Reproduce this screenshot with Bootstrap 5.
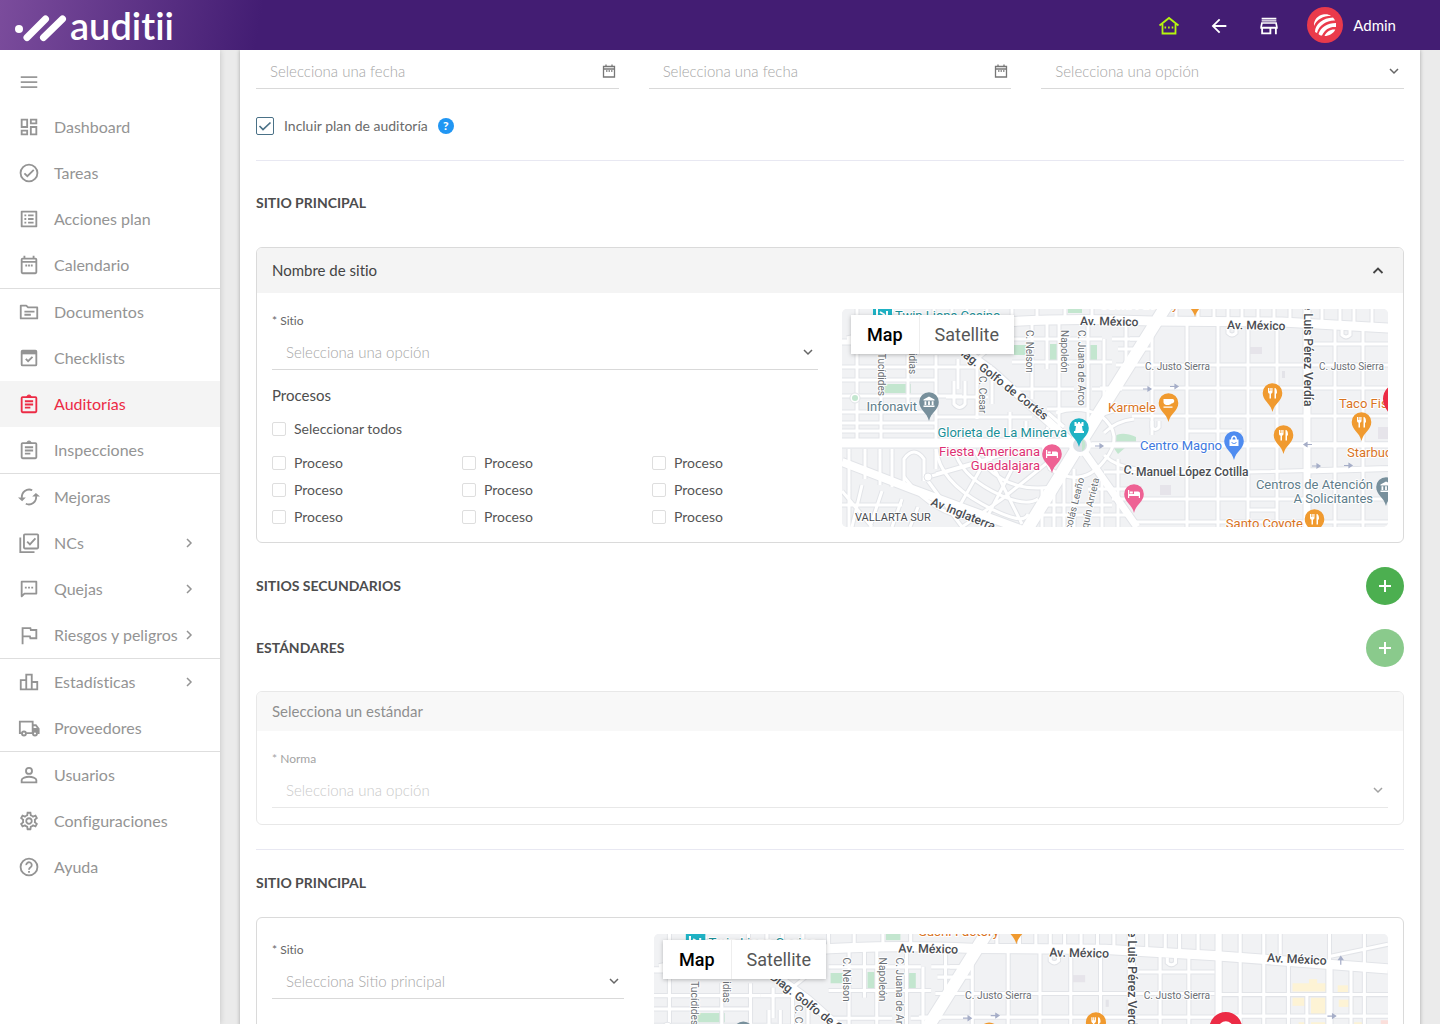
<!DOCTYPE html>
<html lang="es">
<head>
<meta charset="utf-8">
<meta name="viewport" content="width=device-width, initial-scale=1">
<title>Auditii - Auditorías</title>
<link href="https://cdn.jsdelivr.net/npm/bootstrap@5.3.0/dist/css/bootstrap.min.css" rel="stylesheet">
<style>
  body { font-family: Lato, "Open Sans", sans-serif; font-size: 15px; line-height: 18px; color: #4d4d4d; background: #ebebeb; font-variant-ligatures: none; }
  .au-shell { height: 100vh; }
  .au-top { height: 50px; background: linear-gradient(100deg, #7b4c9c 0, #431d73 260px); color: #fff; z-index: 3; }
  .au-logo { font-size: 38px; line-height: 50px; font-weight: 600; color: #fff; }
  .au-top .btn { width: 50px; height: 50px; color: #fff; }
  .au-user { gap: 10px; margin-left: 13px; padding-right: 28px; }
  .au-side { width: 220px; background: #fff; box-shadow: 0 0 6px rgba(0,0,0,.18); z-index: 2; }
  .au-menu { height: 54px; padding: 10px 18px 0; color: #999; }
  .au-menu .btn { color: inherit; }
  .au-link { height: 46px; padding: 0 23px 0 18px; color: #949494; text-decoration: none; font-size: 16px; white-space: nowrap; }
  .au-link:hover { color: #666; }
  .au-link.active { background: #f4f4f4; color: #ec2b45; }
  .au-link .au-ico { margin-right: 14px; }
  .au-group + .au-group { border-top: 1px solid #dedede; }
  .au-ico { width: 22px; height: 22px; flex: none; fill: currentColor; }
  .au-ico-sm { width: 16px; height: 16px; flex: none; fill: currentColor; }
  .au-stroke { fill: none; stroke: currentColor; stroke-width: 2; }
  .au-main { padding: 0 20px; }
  .au-sheet { padding: 0 16px; background: #fff; box-shadow: 0 0 4px rgba(0,0,0,.3); }
  .au-g30 { --bs-gutter-x: 30px; }
  .au-field { border-bottom: 1px solid #d9d9d9; padding-right: 2px; color: #777; }
  .au-field .form-control, .au-field .form-select { height: 34px; border: 0; border-radius: 0; padding: 0 14px; font-size: 15px; font-weight: 300; color: #a6a6a6; background-color: transparent; box-shadow: none; }
  .au-field .form-control::placeholder { color: #a6a6a6; opacity: 1; }
  .au-field .form-select { background-size: 12px 12px; background-position: right 2px center; background-image: url("data:image/svg+xml,%3csvg xmlns='http://www.w3.org/2000/svg' viewBox='0 0 12 12'%3e%3cpath fill='none' stroke='%23666' stroke-width='1.5' d='M2 4l4 4 4-4'/%3e%3c/svg%3e"); }
  .au-first { padding-top: 4px; }
  .au-lbl { font-size: 12px; line-height: 16px; padding-bottom: 2px; color: #666; }
  .au-rule { margin: 0; border: 0; border-top: 1px solid #e8e8f2; opacity: 1; }
  .au-title { margin: 0; font-size: 14px; line-height: 18px; font-weight: 700; color: #4d4d4d; }
  .au-title-lg { padding: 33px 0 35px; }
  .au-title-md { padding: 24px 0 25px; }
  .au-box { border: 1px solid #dadada; border-radius: 6px; overflow: hidden; background: #fff; }
  .au-head { background: #f4f4f4; height: 45px; padding: 0 15px 2px; color: #444; font-size: 15px; }
  .au-head .btn { color: #444; padding: 0 2px; }
  .au-body { padding: 16px 15px 15px; }
  .au-muted { opacity: .6; }
  .au-muted .au-head { height: 39px; }
  .au-muted .au-body { padding-bottom: 16px; }
  .au-check { gap: 8px; cursor: pointer; color: #555; font-size: 14px; }
  .au-check .form-check-input { width: 14px; height: 14px; margin: 0; border: 1px solid #dedede; border-radius: 2px; box-shadow: none; }
  .au-grid { row-gap: 9px; }
  .au-plan { gap: 10px; padding: 28px 0 25px; color: #6b6b6b; font-size: 14px; }
  .au-plan .form-check-input { width: 18px; height: 18px; margin: 0; border: 1px solid #4a7187; border-radius: 2px; background-color: #fff; background-size: 16px 16px; background-position: center; }
  .au-plan .form-check-input:checked { background-image: url("data:image/svg+xml,%3csvg xmlns='http://www.w3.org/2000/svg' viewBox='0 0 16 16'%3e%3cpath fill='none' stroke='%234a7187' stroke-width='1.7' d='M2.5 8l3.5 3.5L13.5 4.5'/%3e%3c/svg%3e"); }
  .au-help { width: 16px; height: 16px; background: #2196f3; color: #fff; font-size: 12px; line-height: 16px; font-weight: 900; border: 0; padding: 0; }
  .au-add { width: 38px; height: 38px; background: #4caf50; border: 0; padding: 0; color: #fff; }
  .au-add:disabled { background: #4caf50; opacity: .65; }
  .au-map { border-radius: 5px; overflow: hidden; height: 218px; background: #f1f2f4; }
  .au-map svg { display: block; width: 100%; height: auto; }
  .au-map text { font-family: Roboto, sans-serif; paint-order: stroke; stroke: #fff; stroke-width: 2px; stroke-linejoin: round; }
  .au-mode { top: 6px; left: 9px; box-shadow: 0 1px 4px rgba(0,0,0,.25); background: #fff; }
  .au-mode .btn { height: 39px; padding: 0 16px; border: 0; border-radius: 0; font-family: Roboto, sans-serif; font-size: 18px; line-height: 39px; color: #565656; }
  .au-mode .btn.active { color: #000; font-weight: 500; background: #fff; }
  .au-mode .btn + .btn { border-left: 1px solid #eee; padding: 0 15px; }
</style>
<script src="https://cdn.jsdelivr.net/npm/bootstrap@5.3.0/dist/js/bootstrap.bundle.min.js"></script>
</head>
<body>
<div class="au-shell d-flex flex-column overflow-hidden">
  <header class="au-top d-flex align-items-center flex-shrink-0 position-relative">
    <a href="#" class="au-logo d-flex align-items-center text-decoration-none" aria-label="auditii">
      <svg width="70" height="50" viewBox="0 0 70 50" aria-hidden="true"><circle cx="19" cy="29" r="4" fill="#fff"/><path d="M27 37.500 45.500 19M43.500 37.500 62.500 19" stroke="#fff" stroke-width="7" stroke-linecap="round"/></svg><span>auditii</span>
    </a>
    <nav class="d-flex align-items-center ms-auto pe-3" aria-label="Cuenta">
      <button class="btn p-0 border-0" type="button" aria-label="Inicio"><svg width="22" height="22" viewBox="0 0 22 22" fill="none" stroke="#b6f50e" stroke-width="1.800"><path d="M1.500 10.500 11 3l9.500 7.500M4.500 9v9.500h13V9"/><path d="M6.500 12.500h9" stroke-dasharray="1.600 2"/></svg></button>
      <button class="btn p-0 border-0" type="button" aria-label="Volver"><svg class="au-ico" viewBox="0 0 24 24"><path d="M20 11H7.830l5.590-5.590L12 4l-8 8 8 8 1.410-1.410L7.830 13H20v-2z"/></svg></button>
      <button class="btn p-0 border-0" type="button" aria-label="Tienda"><svg class="au-ico" viewBox="0 0 24 24"><path d="M4 3h16v1.800H4zM4 5.800h16v1.400H4zM18.900 9.600l.7 3.300H4.400l.7-3.300h13.800M20.500 8h-17L2.500 13v2h1v6h11v-6h4v6h2v-6h1v-2L20.500 8zM5.500 19v-4h7v4h-7z"/></svg></button>
      <a href="#" class="au-user d-flex align-items-center text-white text-decoration-none">
        <svg width="36" height="36" viewBox="0 0 36 36" aria-hidden="true"><circle cx="18" cy="18" r="18" fill="#ea3a4b"/><g fill="#fff"><path d="M7 19C6.500 13 11 8 17 7.300c3-.3 5 .2 7 1.400C16 9 10 12 7 19z"/><path d="M8 25c0-8 8-14 18-14.500 1 1 1.500 2 2 3C20 13 12 18 10 26z"/><path d="M11.500 27C14 20 20 16 29 16v4c-6-.5-11 2-14 8.500-1.500 0-2.500-.5-3.500-1.500z"/><path d="M17.500 29c2-4.500 6-7 10.800-6.500C26.500 26.500 22 29 17.500 29z"/></g></svg>
        <span>Admin</span>
      </a>
    </nav>
  </header>

  <div class="d-flex flex-grow-1 overflow-hidden">
    <aside class="au-side flex-shrink-0 position-relative">
      <div class="au-menu d-flex align-items-center"><button class="btn p-0 border-0 d-flex" type="button" aria-label="Menú"><svg class="au-ico" viewBox="0 0 24 24"><path d="M3 18.500h18v-1.800H3zm0-5.500h18v-1.800H3zm0-7.300v1.800h18V5.700z"/></svg></button></div>
      <nav aria-label="Principal">
        <div class="au-group">
          <a href="#" class="au-link d-flex align-items-center"><svg class="au-ico" viewBox="0 0 24 24"><path d="M19 5v2h-4V5h4M9 5v6H5V5h4m10 8v6h-4v-6h4M9 17v2H5v-2h4M21 3h-8v6h8V3zM11 3H3v10h8V3zm10 8h-8v10h8V11zm-10 4H3v6h8v-6z"/></svg>Dashboard</a>
          <a href="#" class="au-link d-flex align-items-center"><svg class="au-ico au-stroke" viewBox="0 0 24 24"><circle cx="12" cy="12" r="9.200"/><path d="M7 12.300l3.200 3.200L17.200 8.600"/></svg>Tareas</a>
          <a href="#" class="au-link d-flex align-items-center"><svg class="au-ico" viewBox="0 0 24 24"><path d="M19 5v14H5V5h14m1.100-2H3.900c-.5 0-.9.4-.9.9v16.200c0 .4.4.9.9.9h16.200c.4 0 .9-.5.9-.9V3.900c0-.5-.5-.9-.9-.9zM11 7h6v2h-6V7zm0 4h6v2h-6v-2zm0 4h6v2h-6zM7 7h2v2H7zm0 4h2v2H7zm0 4h2v2H7z"/></svg>Acciones plan</a>
          <a href="#" class="au-link d-flex align-items-center"><svg class="au-ico au-stroke" viewBox="0 0 24 24"><rect x="4" y="5" width="16" height="16" rx="1"/><path d="M4 8.500h16M7 2v3M17 2v3M8 12.500h2M11 12.500h2M14 12.500h2"/></svg>Calendario</a>
        </div>
        <div class="au-group">
          <a href="#" class="au-link d-flex align-items-center"><svg class="au-ico au-stroke" viewBox="0 0 24 24"><path d="M3 5h6l2 2h10v12H3z" stroke-linejoin="round"/><path d="M7 11.500h11M7 15h7"/></svg>Documentos</a>
          <a href="#" class="au-link d-flex align-items-center"><svg class="au-ico au-stroke" viewBox="0 0 24 24"><rect x="4" y="4" width="16" height="16" rx="1"/><path d="M4 6h16" stroke-width="4"/><path d="M8.500 13l2.500 2.500 4.800-4.800"/></svg>Checklists</a>
          <a href="#" class="au-link active d-flex align-items-center" aria-current="page"><svg class="au-ico au-stroke" viewBox="0 0 24 24"><rect x="4" y="4.500" width="16" height="16.500" rx="1"/><path d="M7.500 9h9M7.500 12.500h9M7.500 16h6"/><path d="M9.500 4a2.600 2.600 0 0 1 5 0z" fill="currentColor" stroke-width="1"/></svg>Auditorías</a>
          <a href="#" class="au-link d-flex align-items-center"><svg class="au-ico au-stroke" viewBox="0 0 24 24"><rect x="4" y="4.500" width="16" height="16.500" rx="1"/><path d="M7.500 9h9M7.500 12.500h9M7.500 16h6"/><path d="M9.500 4a2.600 2.600 0 0 1 5 0z" fill="currentColor" stroke-width="1"/></svg>Inspecciones</a>
        </div>
        <div class="au-group">
          <a href="#" class="au-link d-flex align-items-center"><svg class="au-ico au-stroke" viewBox="0 0 24 24"><path d="M15.500 4.600A8 8 0 0 0 4.300 13M8.500 19.400A8 8 0 0 0 19.700 11"/><path d="M0 12.500h8.500L4.500 16.500zM24 11.500h-8.500L19.500 7.500z" fill="currentColor" stroke="none"/></svg>Mejoras</a>
          <a href="#" class="au-link d-flex align-items-center"><svg class="au-ico au-stroke" viewBox="0 0 24 24"><rect x="6.500" y="2.500" width="15.500" height="15.500" rx="1"/><path d="M2.500 6v16H18M10 10.500l3 3 6-6.500"/></svg>NCs<svg class="au-ico-sm au-stroke ms-auto" viewBox="0 0 16 16"><path d="M6 4l4 4-4 4" stroke-width="1.500"/></svg></a>
          <a href="#" class="au-link d-flex align-items-center"><svg class="au-ico au-stroke" viewBox="0 0 24 24"><path d="M4 4h16v13H7l-3 3z" stroke-linejoin="round"/><path d="M7.500 10.500h2M11 10.500h2M14.500 10.500h2"/></svg>Quejas<svg class="au-ico-sm au-stroke ms-auto" viewBox="0 0 16 16"><path d="M6 4l4 4-4 4" stroke-width="1.500"/></svg></a>
          <a href="#" class="au-link d-flex align-items-center"><svg class="au-ico au-stroke" viewBox="0 0 24 24"><path d="M5 22V4.500h8.500l.5 2h6v9h-6.500l-.5-2H5"/></svg>Riesgos y peligros<svg class="au-ico-sm au-stroke ms-auto" viewBox="0 0 16 16"><path d="M6 4l4 4-4 4" stroke-width="1.500"/></svg></a>
        </div>
        <div class="au-group">
          <a href="#" class="au-link d-flex align-items-center"><svg class="au-ico au-stroke" viewBox="0 0 24 24"><path d="M3 10h6v10H3zM9 4h6v16H9zM15 12h6v8h-6z"/></svg>Estadísticas<svg class="au-ico-sm au-stroke ms-auto" viewBox="0 0 16 16"><path d="M6 4l4 4-4 4" stroke-width="1.500"/></svg></a>
          <a href="#" class="au-link d-flex align-items-center"><svg class="au-ico au-stroke" viewBox="0 0 24 24"><path d="M4 17.500H2V5h14v12.500H9M16 9h3.500l3 4v4.500H21"/><path d="M16 12h7v5h-7z" fill="currentColor" stroke="none"/><circle cx="6.500" cy="18" r="2.200" fill="#fff"/><circle cx="18.500" cy="18" r="2.200" fill="#fff"/></svg>Proveedores</a>
        </div>
        <div class="au-group">
          <a href="#" class="au-link d-flex align-items-center"><svg class="au-ico au-stroke" viewBox="0 0 24 24"><circle cx="12" cy="7.500" r="3.300"/><path d="M4 20V17.500c0-2.300 5-3.600 8-3.600s8 1.300 8 3.600V20z"/></svg>Usuarios</a>
          <a href="#" class="au-link d-flex align-items-center"><svg class="au-ico" viewBox="0 0 24 24"><path d="M19.430 12.980c.04-.32.070-.64.070-.98 0-.34-.03-.66-.07-.98l2.110-1.650c.19-.15.24-.42.12-.64l-2-3.460c-.09-.16-.26-.25-.44-.25-.06 0-.12.010-.17.030l-2.490 1c-.52-.4-1.080-.73-1.690-.98l-.38-2.650C14.460 2.180 14.250 2 14 2h-4c-.25 0-.46.18-.49.42l-.38 2.650c-.61.25-1.170.59-1.690.98l-2.490-1c-.06-.02-.12-.03-.18-.03-.17 0-.34.090-.43.250l-2 3.460c-.13.220-.07.490.12.640l2.110 1.650c-.04.320-.07.650-.07.980 0 .33.030.66.070.98l-2.110 1.650c-.19.150-.24.420-.12.640l2 3.460c.09.160.26.250.44.250.06 0 .12-.01.170-.03l2.490-1c.52.400 1.080.730 1.690.980l.38 2.650c.03.240.24.420.49.420h4c.25 0 .46-.18.490-.42l.38-2.650c.61-.25 1.170-.59 1.690-.98l2.490 1c.06.020.12.030.18.030.17 0 .34-.09.430-.25l2-3.460c.12-.22.070-.49-.12-.64l-2.110-1.650zm-1.980-1.710c.04.310.05.520.05.730 0 .21-.02.430-.05.730l-.14 1.130.89.700 1.080.840-.7 1.210-1.270-.51-1.040-.42-.9.680c-.43.320-.84.560-1.250.730l-1.060.43-.16 1.130-.2 1.350h-1.400l-.19-1.350-.16-1.130-1.060-.43c-.43-.18-.83-.41-1.230-.71l-.91-.7-1.060.43-1.270.51-.7-1.210 1.080-.84.890-.7-.14-1.130c-.03-.31-.05-.54-.05-.74s.02-.43.050-.73l.14-1.130-.89-.7-1.080-.84.700-1.210 1.270.51 1.040.42.900-.68c.43-.32.840-.56 1.250-.73l1.060-.43.160-1.130.2-1.350h1.390l.19 1.350.16 1.130 1.060.43c.43.180.83.410 1.230.71l.91.700 1.060-.43 1.270-.51.700 1.210-1.070.85-.89.700.14 1.130zM12 8c-2.210 0-4 1.790-4 4s1.790 4 4 4 4-1.790 4-4-1.790-4-4-4zm0 6c-1.100 0-2-.9-2-2s.9-2 2-2 2 .9 2 2-.9 2-2 2z"/></svg>Configuraciones</a>
          <a href="#" class="au-link d-flex align-items-center"><svg class="au-ico au-stroke" viewBox="0 0 24 24"><circle cx="12" cy="12" r="9.200"/><path d="M9 10a3 3 0 1 1 4.700 2.300c-1.100.8-1.700 1.300-1.700 2.700M12 16.300v2"/></svg>Ayuda</a>
        </div>
      </nav>
    </aside>

    <main class="au-main flex-grow-1 overflow-hidden">
      <form class="au-sheet">
        <div class="row au-g30 au-first">
          <div class="col-4"><div class="au-field d-flex align-items-center"><input class="form-control" type="text" placeholder="Selecciona una fecha" aria-label="Fecha de inicio"><svg class="au-ico-sm au-stroke" viewBox="0 0 16 16"><path d="M2.500 3.500h11v10.500h-11zM2.500 6h11M5 1.500v2M11 1.500v2M5 8h1.500M7.500 8H9M10 8h1.500" stroke-width="1.300"/></svg></div></div>
          <div class="col-4"><div class="au-field d-flex align-items-center"><input class="form-control" type="text" placeholder="Selecciona una fecha" aria-label="Fecha de fin"><svg class="au-ico-sm au-stroke" viewBox="0 0 16 16"><path d="M2.500 3.500h11v10.500h-11zM2.500 6h11M5 1.500v2M11 1.500v2M5 8h1.500M7.500 8H9M10 8h1.500" stroke-width="1.300"/></svg></div></div>
          <div class="col-4"><div class="au-field"><select class="form-select" aria-label="Opción"><option>Selecciona una opción</option></select></div></div>
        </div>
        <div class="au-plan d-flex align-items-center"><input class="form-check-input" type="checkbox" id="plan" checked><label for="plan">Incluir plan de auditoría</label><button type="button" class="au-help rounded-circle" aria-label="Ayuda sobre el plan">?</button></div>
        <hr class="au-rule">
        <h2 class="au-title au-title-lg">SITIO PRINCIPAL</h2>

        <section class="au-box">
          <div class="au-head d-flex align-items-center justify-content-between"><span>Nombre de sitio</span><button type="button" class="btn border-0 d-flex" aria-label="Contraer"><svg class="au-ico-sm au-stroke" viewBox="0 0 16 16"><path d="M3.500 11 8 6.500l4.500 4.500" stroke-width="1.800"/></svg></button></div>
          <div class="au-body">
            <div class="row gx-4">
              <div class="col-6">
                <label class="au-lbl d-block pt-1" for="sitio1">* Sitio</label>
                <div class="au-field pt-1"><select class="form-select" id="sitio1"><option>Selecciona una opción</option></select></div>
                <div class="pt-3 pb-3">Procesos</div>
                <label class="au-check d-flex align-items-center mb-3"><input class="form-check-input" type="checkbox">Seleccionar todos</label>
                <div class="au-grid row gx-4" id="procesos"></div>
              </div>
              <div class="col-6">
                <div class="au-map position-relative" data-w="546" data-top="0"></div>
              </div>
            </div>
          </div>
        </section>

        <div class="d-flex align-items-center justify-content-between pt-4"><h2 class="au-title">SITIOS SECUNDARIOS</h2><button type="button" class="au-add btn rounded-circle d-flex align-items-center justify-content-center" aria-label="Agregar sitio"><svg width="14" height="14" viewBox="0 0 14 14"><path d="M7 1v12M1 7h12" stroke="#fff" stroke-width="2"/></svg></button></div>
        <div class="d-flex align-items-center justify-content-between py-4"><h2 class="au-title">ESTÁNDARES</h2><button type="button" disabled class="au-add btn rounded-circle d-flex align-items-center justify-content-center" aria-label="Agregar estándar"><svg width="14" height="14" viewBox="0 0 14 14"><path d="M7 1v12M1 7h12" stroke="#fff" stroke-width="2"/></svg></button></div>

        <section class="au-box au-muted">
          <div class="au-head d-flex align-items-center">Selecciona un estándar</div>
          <div class="au-body">
            <label class="au-lbl d-block pt-1" for="norma">* Norma</label>
            <div class="au-field pt-1"><select class="form-select" id="norma"><option>Selecciona una opción</option></select></div>
          </div>
        </section>
        <hr class="au-rule mt-4">
        <h2 class="au-title au-title-md">SITIO PRINCIPAL</h2>

        <section class="au-box">
          <div class="au-body">
            <div class="row au-g30">
              <div class="col-4">
                <label class="au-lbl d-block pt-2" for="sitio2">* Sitio</label>
                <div class="au-field pt-1"><select class="form-select" id="sitio2"><option>Selecciona Sitio principal</option></select></div>
              </div>
              <div class="col-8">
                <div class="au-map position-relative" data-w="715" data-top="-2"></div>
              </div>
            </div>
          </div>
        </section>
      </form>
    </main>
  </div>
</div>

<script>
  document.getElementById('procesos').innerHTML = Array.from({length: 9}, () =>
    '<div class="col-4"><label class="au-check d-flex align-items-center"><input class="form-check-input" type="checkbox">Proceso</label></div>').join('');

  // Streets: [white width, path]
  const roads = [
    [3, 'M15 -4V130M39 46V130M66 46V103M94 46V130M0 58H104M0 71H94M0 87H120M0 103H94M0 114H94M0 122H94'],
    [3, 'M112 72V95Q118 102 123 95V72M104 58H150M135 56V110M150 66V95M94 108H190M104 88H146M168 103V130M184 112V130'],
    [3, 'M116 50V80M135 50L160 30M170 30H260M190 12V90M205 12V60M217 12V86M246 12V118M262 30V90M170 53H270M170 80H232M250 80H280M205 100H245M217 86V118M270 30H300M284 12V60'],
    [3, 'M92 -4V12M110 -4V12M125 -4V12M145 -4V12M170 -4V12M195 -4V12M223 -4V12M250 -4V12'],
    [3, 'M274 56H546M258 79H546M290 107H546M250 135H546M262 163H400M406 163L715 155M270 190H546M290 213H546M345 122H400M435 201H406'],
    [3, 'M288 30H310M310 28V126M345 14V218M376 14V218M406 14V218M435 14V218M493 14V218M521 14V218M465 35H546M276 40H310'],
    [3, 'M310 112V118Q313 123 317 118V112M386 20V24Q390 28 394 24V18M500 21V26Q504 30 508 26V20'],
    [3, 'M356 -4V12M372 -4V12M386 -4V12M400 -4V13M416 -4V13M432 -4V14M448 -4V15M480 -4V16M498 -4V17M512 -4V17M530 -4V18M334 -4V10'],
    [3, 'M7 140V218M23 140V170M38 140V176M50 140V178M62 176V150Q72 136 82 150V172M94 140V160M0 182L30 218M0 196H60M20 176L10 218M40 182L28 218M60 190L50 218M76 198L68 218'],
    [3, 'M94 140Q98 172 140 195T186 205M112 140Q118 165 150 182T196 190M132 140Q140 158 160 170T210 178M62 168Q90 205 130 210M86 168L150 150M86 172L120 218M120 218L160 190L210 150M150 140L118 196M170 160L140 218M150 155L180 215M94 165L180 140'],
    [3, 'M214 104Q236 96 258 106M206 118Q196 136 208 160Q240 180 262 152Q284 126 258 106M222 118L206 104M258 106L290 96M262 124Q274 112 292 110M262 146Q274 158 296 160'],
    [3, 'M200 178V218M212 170V218M222 165V218M232 160V218M200 196H270M190 206H290M246 180H300M260 170V218M276 150V218'],
    [3, 'M571 -4V218M594 -4V218M618 20V218M636 56V218M658 -4V218M679 26V218M692 -4V218M550 57H715M550 78H715M550 100H715M550 125H715M550 185H715M610 -4V18M658 20L715 8'],
    [5, 'M465 162L715 154M0 33H10M5 30L40 22L50 0'],
    [6, 'M550 -4V218M658 25V218'],
    [7, 'M241 141L295 218M465 -4V218'],
    [8, 'M0 153L70 180L181 221'],
    [8, 'M104 28L150 62L227 131'],
    [9, 'M30 26Q80 20 150 14T310 12L440 13L546 19L715 32'],
    [9, 'M0 134H237'],
    [5, 'M237 136H546'],
    [12, 'M326 -6L237 136L184 222']
  ];
  const parks = [[42,75,27,9],[208,35,9,19],[244,36,11,18],[226,-4,14,8],[172,36,12,10]];
  const halls = [[408,38,12,7,'#e6e4ea'],[440,62,3,7,'#e3e3e8'],[318,176,11,10,'#e6e4ea'],[536,118,10,12,'#e6e4ea'],[622,46,34,8,'#fdf3d5'],[638,42,8,6,'#fdf3d5'],[666,48,10,7,'#fdf3d5'],[622,60,14,8,'#fdf3d5'],[640,60,14,16,'#fdf3d5'],[667,62,14,7,'#fdf3d5'],[628,84,8,12,'#fdf3d5'],[640,84,14,10,'#fdf3d5'],[682,84,8,10,'#fdf3d5'],[708,82,7,12,'#fbdfdb']];
  const K = '#4a4d52', G = '#6b7075', T = '#1a8f98', O = '#d9741f', P = '#dd3173', B = '#4079e0', S = '#607d8b';
  // Labels: [text, x, y, size, colour, weight, rotation, anchor]
  const labels = [
    ['Twin Lions Casino',53,11,13,T,400,0],['Av. México',238,16,12,K,500,1],['Av. México',385,20,12,K,500,1],['Av. México',597,25,12,K,500,3],
    ['C. Justo Sierra',303,61,10,G,400,0],['C. Justo Sierra',477,61,10,G,400,0],
    ['C. Nelson',184,21,10,G,400,90],['Napoleón',219,21,10,G,400,90],['C. Juana de Arco',236,21,10,G,400,90],
    ['Tucídides',36,44,10,G,400,90],['idias',67,44,10,G,400,90],['C. Cesar',137,67,10,G,400,90],
    ['Diag. Golfo de Cortés',112,41,12,K,500,38],['de Luis Pérez Verdía',462,-12,12,K,500,90],
    ['Infonavit',75,102,13,S,400,0,'end'],['Glorieta de La Minerva',225,128,13,T,400,0,'end'],
    ['Fiesta Americana',198,147,13,P,400,0,'end'],['Guadalajara',198,161,13,P,400,0,'end'],
    ['Karmele',314,103,13,O,400,0,'end'],['Taco Fish',497,99,13,O,400,0],['Centro Magno',380,141,13,B,400,0,'end'],['Starbucks',505,148,13,O,400,0],
    ['C.',281,164,12,K,500,10],['Manuel López Cotilla',294,167,12,K,500,0],['Centros de Atención',531,180,13,S,400,0,'end'],['A Solicitantes',531,194,13,S,400,0,'end'],
    ['Santo Coyote',461,219,13,O,400,0,'end'],['Sushi Factory',258,0,13,O,400,0],['VALLARTA SUR',13,212,11,K,400,0],['Av Inglaterra',88,196,12,K,500,22],
    ['Nicolás Leaño',227,231,10,G,400,-76],['Joaquín Arrieta',242,236,10,G,400,-77]
  ];
  const fork = '<path d="M-4.500-5v3.500c0 2 1 2 1.500 2.300V5.500h1.500V.8C-1 .5 0 .5 0-1.500V-5h-1.200v3h-.6v-3h-.9v3h-.6v-3zM2-5C4-5 4.500-3 4.500 0L3.500 1v4.500H2z"/>';
  const bed = '<path d="M-6-4h1.200v4H0v-2.500h4c1.300 0 2 .7 2 2V4H4.800V2h-9.600v2H-6zM-4.200-2.500h3v2h-3z"/>';
  const bank = '<path d="M0-5.500 5.500-2.500v1h-11v-1zM-4.500-.8h1.800V3h-1.800zM-.9-.8H.9V3H-.9zM2.700-.8h1.800V3H2.700zM-5.500 3.500h11V5h-11z"/>';
  const pins = [
    [87,93,'#78909c',bank],[237,119,'#1fb2c4','<path d="M-4.500-6h2v1.500h1.500V-6h2v1.500h1.500V-6h2v4h-1.500l.8 5h1.200v2h-10V3h1.200l.8-5h-1.500z"/>'],
    [210,145,'#ee6294',bed],[292,185,'#ee6294',bed],
    [326.500,94,'#f09a2f','<path d="M-5-4H4c2.500 0 2.500 4.500-1 4.500C2.500 2-4 3.500-5-.5zM-5 3.500h9v1.200h-9z"/>'],
    [430.500,84,'#f09a2f',fork],[441.500,126,'#f09a2f',fork],[519.500,113,'#f09a2f',fork],[472.500,210,'#f09a2f',fork],[353,-11,'#f09a2f',''],
    [392,132,'#4f8cf0','<path d="M-4.500-1.500H-3C-3-7 3-7 3-1.500h1.500V5h-9zm3 0h3C1.500-5-1.500-5-1.500-1.500z"/><path d="M-2.500 1c1 2 4 2 5 0" fill="none" stroke="#4f8cf0"/>'],
    [544,178,'#78909c',bank]
  ];
  const arrows = [[305,80,0],[332,77.500,0],[466,135.500,180],[474,157,0],[506,156.500,0],[257,137,0],[660,78,0],[669,24,-90]];

  function mapSvg(w, top) {
    const casing = roads.map(([s, d]) => `<path d="${d}" stroke-width="${s + 2}"/>`).join('');
    const fill = roads.map(([s, d]) => `<path d="${d}" stroke-width="${s}"/>`).join('');
    return `<svg viewBox="0 ${top} ${w} 218" role="img" aria-label="Mapa">
      <rect y="-4" width="${w}" height="222" fill="#f1f2f4"/>
      ${halls.map(([x, y, a, b, c]) => `<rect x="${x}" y="${y}" width="${a}" height="${b}" fill="${c}"/>`).join('')}
      ${parks.map(([x, y, a, b]) => `<rect x="${x}" y="${y}" width="${a}" height="${b}" fill="#c3e6cf"/>`).join('')}
      <path d="M271 129Q278 121 294 128V133H271zM271 138H284L276 145z" fill="#c3e6cf"/>
      <g fill="none" stroke="#e2e4e8">${casing}</g><g fill="none" stroke="#fff">${fill}</g>
      <circle cx="238" cy="136" r="11" fill="#fff"/><circle cx="238" cy="136" r="7" fill="#dbe0e6"/><path d="M240 130a7 7 0 0 1 0 12z" fill="#c3e6cf"/>
      <circle cx="13" cy="89" r="5" fill="#fff" stroke="#e2e4e8"/><circle cx="13" cy="89" r="3" fill="#c3e6cf"/>
      <circle cx="86" cy="168" r="4" fill="#fff" stroke="#e2e4e8"/>
      <g stroke="#a6aec8" stroke-width="1.200" fill="#a6aec8">${arrows.map(([x, y, r]) => `<path transform="translate(${x} ${y}) rotate(${r})" d="M-4 0H3M1-2 4 0 1 2z"/>`).join('')}</g>
      <rect x="31" y="-8" width="19" height="19" rx="2" fill="#1fb2c4"/><path d="M35 0v6M45 2v6M38 3l5 3" stroke="#fff" stroke-width="2"/>
      ${labels.filter(l => l[1] < w).map(([t, x, y, s, c, wt, r, a]) => `<text transform="translate(${x} ${y}) rotate(${r})" font-size="${s}" font-weight="${wt}" fill="${c}" text-anchor="${a || 'start'}">${t}</text>`).join('')}
      ${pins.map(([x, y, c, g]) => `<g transform="translate(${x} ${y})"><path d="M0 19C-2 10-9.800 8-9.800 0a9.800 9.800 0 0 1 19.600 0C9.800 8 2 10 0 19z" fill="${c}"/><g fill="#fff">${g}</g></g>`).join('')}
      <g transform="translate(557 90)"><path d="M0 32C-3 18-16 12-16 0a16 16 0 0 1 32 0C16 12 3 18 0 32z" fill="#ec2b45"/><circle r="7" fill="#fff"/></g>
    </svg>
    <div class="au-mode position-absolute d-flex"><button type="button" class="btn active">Map</button><button type="button" class="btn">Satellite</button></div>`;
  }
  document.querySelectorAll('.au-map').forEach(el => { el.innerHTML = mapSvg(+el.dataset.w, +el.dataset.top); });
</script>
</body>
</html>
